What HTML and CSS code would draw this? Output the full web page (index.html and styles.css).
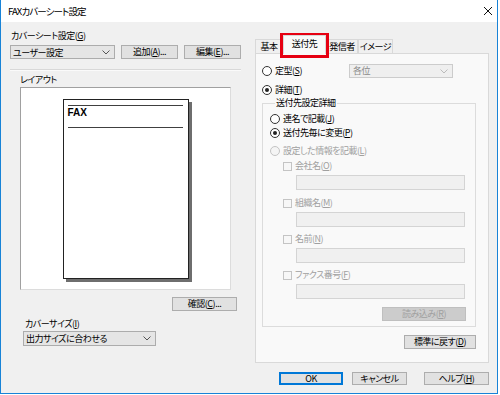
FILE: index.html
```html
<!DOCTYPE html>
<html lang="ja">
<head>
    <meta charset="UTF-8">
    <title>FAXカバーシート設定</title>
    <link rel="stylesheet" href="styles.css">
</head>
<body>
    <div class="window">
        <!-- タイトルバー -->
        <div class="titlebar">
            <span class="title">FAXカバーシート設定</span>
            <svg class="close" width="10" height="10" viewBox="0 0 10 10">
                <line x1="1" y1="1" x2="9" y2="9"/>
                <line x1="9" y1="1" x2="1" y2="9"/>
            </svg>
        </div>

        <div class="dialog">
            <div class="main">
                <!-- 左側 -->
                <div class="left">
                    <div class="label top-label">カバーシート設定(<u>G</u>)</div>
                    <div class="row-btns">
                        <div class="combo combo-user">
                            <span>ユーザー設定</span>
                            <svg class="chev" width="8" height="5" viewBox="0 0 8 5"><polyline points="0.5,0.5 4,4 7.5,0.5"/></svg>
                        </div>
                        <div class="btn btn-add">追加(<u>A</u>)...</div>
                        <div class="btn btn-edit">編集(<u>E</u>)...</div>
                    </div>
                    <div class="separator"></div>
                    <div class="label layout-label">レイアウト</div>
                    <div class="preview">
                        <div class="page">
                            <div class="page-line"></div>
                            <div class="page-fax">FAX</div>
                            <div class="page-line second"></div>
                        </div>
                    </div>
                    <div class="btn btn-check">確認(<u>C</u>)...</div>
                    <div class="label size-label">カバーサイズ(<u>I</u>)</div>
                    <div class="combo combo-size">
                        <span>出力サイズに合わせる</span>
                        <svg class="chev" width="8" height="5" viewBox="0 0 8 5"><polyline points="0.5,0.5 4,4 7.5,0.5"/></svg>
                    </div>
                </div>

                <!-- 右側 タブ -->
                <div class="right">
                    <div class="tabs">
                        <div class="tab tab-basic">基本</div>
                        <div class="tab tab-dest active">送付先</div>
                        <div class="tab tab-sender">発信者</div>
                        <div class="tab tab-image">イメージ</div>
                    </div>
                    <div class="panel">
                        <div class="opt-row first">
                            <span class="radio"></span>
                            <span>定型(<u>S</u>)</span>
                            <div class="combo combo-fixed disabled">
                                <span>各位</span>
                                <svg class="chev" width="8" height="5" viewBox="0 0 8 5"><polyline points="0.5,0.5 4,4 7.5,0.5"/></svg>
                            </div>
                        </div>
                        <div class="opt-row second">
                            <span class="radio checked"></span>
                            <span>詳細(<u>T</u>)</span>
                        </div>

                        <fieldset class="group">
                            <legend>送付先設定詳細</legend>
                            <div class="opt-row r-joint">
                                <span class="radio"></span>
                                <span>連名で記載(<u>J</u>)</span>
                            </div>
                            <div class="opt-row r-each">
                                <span class="radio checked"></span>
                                <span>送付先毎に変更(<u>P</u>)</span>
                            </div>
                            <div class="opt-row r-info disabled">
                                <span class="radio"></span>
                                <span>設定した情報を記載(<u>L</u>)</span>
                            </div>

                            <div class="opt-row chk-row first-chk disabled">
                                <span class="checkbox"></span>
                                <span>会社名(<u>O</u>)</span>
                            </div>
                            <div class="textbox"></div>
                            <div class="opt-row chk-row disabled">
                                <span class="checkbox"></span>
                                <span>組織名(<u>M</u>)</span>
                            </div>
                            <div class="textbox"></div>
                            <div class="opt-row chk-row next-chk disabled">
                                <span class="checkbox"></span>
                                <span>名前(<u>N</u>)</span>
                            </div>
                            <div class="textbox"></div>
                            <div class="opt-row chk-row next-chk disabled">
                                <span class="checkbox"></span>
                                <span>ファクス番号(<u>F</u>)</span>
                            </div>
                            <div class="textbox"></div>
                            <div class="btn btn-load disabled">読み込み(<u>R</u>)</div>
                        </fieldset>

                        <div class="btn btn-reset">標準に戻す(<u>D</u>)</div>
                    </div>
                </div>
            </div>

            <!-- 下部ボタン -->
            <div class="footer">
                <div class="btn btn-ok">OK</div>
                <div class="btn btn-cancel">キャンセル</div>
                <div class="btn btn-help">ヘルプ(<u>H</u>)</div>
            </div>
        </div>

        <!-- 注目枠 -->
        <div class="highlight"></div>
    </div>
</body>
</html>
```

FILE: styles.css
```css
* {
    margin: 0;
    padding: 0;
    box-sizing: border-box;
}

body {
    background-color: #ffffff;
    font-family: "Noto Sans CJK JP", "Noto Sans", sans-serif;
    font-size: 9px;
    font-feature-settings: "palt";
    letter-spacing: -0.5px;
    white-space: nowrap;
    color: #000;
}

u {
    text-decoration: underline;
    text-underline-offset: 1px;
}

/* ウィンドウ */
.window {
    width: 498px;
    height: 394px;
    border: 1px solid #1883d7;
    border-top: none;
    position: relative;
    background-color: #f0f0f0;
}

.titlebar {
    height: 22px;
    background-color: #ffffff;
    display: flex;
    align-items: center;
    padding-left: 7px;
}

.title {
    font-size: 9.5px;
    letter-spacing: -0.9px;
}

.close {
    margin-left: auto;
    margin-right: 4px;
    stroke: #111;
    stroke-width: 1;
}

.dialog {
    padding-left: 9px;
}

.main {
    display: flex;
}

/* 共通部品 */
.label {
    line-height: 14px;
}

.btn {
    height: 14px;
    background-color: #e1e1e1;
    border: 1px solid #adadad;
    display: flex;
    align-items: center;
    justify-content: center;
    line-height: 12px;
}

.btn.disabled {
    background-color: #cccccc;
    border-color: #bfbfbf;
    color: #a0a0a0;
}

.combo {
    height: 14px;
    background-color: #e5e5e5;
    border: 1px solid #acacac;
    display: flex;
    align-items: center;
    padding-left: 2px;
    padding-right: 4px;
}

.combo .chev {
    margin-left: auto;
    fill: none;
    stroke: #555;
    stroke-width: 1;
}

.combo.disabled {
    background-color: #efefef;
    border-color: #cccccc;
    color: #8a8a8a;
}

.combo.disabled .chev {
    stroke: #bbb;
}

/* 左側 */
.left {
    width: 231px;
    display: flex;
    flex-direction: column;
}

.top-label {
    margin-top: 7px;
    margin-left: 1px;
}

.row-btns {
    display: flex;
    margin-top: 2px;
}

.combo-user {
    width: 105px;
}

.btn-add {
    width: 57px;
    margin-left: 6px;
}

.btn-edit {
    width: 57px;
    margin-left: 6px;
}

.separator {
    margin-top: 10px;
    height: 2px;
    border-top: 1px solid #d8d8d8;
    border-bottom: 1px solid #fafafa;
}

.layout-label {
    margin-top: 2px;
    margin-left: 10px;
}

.preview {
    margin-left: 10px;
    width: 211px;
    height: 203px;
    background-color: #ffffff;
    border-top: 1px solid #a0a0a0;
    border-left: 1px solid #a0a0a0;
    border-right: 1px solid #dcdcdc;
    border-bottom: 1px solid #dcdcdc;
}

.page {
    width: 126px;
    height: 180px;
    margin: 11px auto 0;
    border: 1px solid #222;
    box-shadow: 3px 3px 0 #6e6e6e;
    padding: 5px 5px 0 4px;
}

.page-line {
    height: 1px;
    background-color: #404040;
}

.page-line.second {
    margin-top: 7px;
}

.page-fax {
    font-family: "Liberation Sans", sans-serif;
    font-weight: bold;
    font-size: 10px;
    letter-spacing: 0;
    line-height: 14px;
}

.btn-check {
    width: 65px;
    margin-top: 7px;
    margin-left: 162px;
}

.size-label {
    margin-top: 6px;
    margin-left: 15px;
}

.combo-size {
    width: 133px;
    height: 15px;
    margin-left: 13px;
}

/* 右側 タブ */
.right {
    width: 234px;
    margin-left: 14px;
    display: flex;
    flex-direction: column;
}

.tabs {
    display: flex;
    align-items: flex-end;
    margin-top: 13px;
    height: 19px;
    margin-bottom: -1px;
}

.tab {
    height: 15px;
    border: 1px solid #d9d9d9;
    border-bottom: none;
    background-color: #f0f0f0;
    display: flex;
    align-items: center;
    justify-content: center;
    line-height: 12px;
}

.tab-basic { width: 28px; }
.tab-dest { width: 43px; }
.tab-sender { width: 32px; }
.tab-image { width: 35px; }

.tab.active {
    height: 19px;
    background-color: #f9f9f9;
    position: relative;
    z-index: 1;
    padding-bottom: 2px;
}

.panel {
    height: 310px;
    border: 1px solid #d9d9d9;
    background-color: #f9f9f9;
    padding-left: 6px;
    display: flex;
    flex-direction: column;
}

.opt-row {
    display: flex;
    align-items: center;
    height: 14px;
    line-height: 12px;
}

.opt-row.first {
    height: 16px;
    margin-top: 9px;
}

.opt-row.second {
    margin-top: 4px;
}

.opt-row.disabled {
    color: #a0a0a0;
}

.radio {
    width: 10px;
    height: 10px;
    border: 1px solid #333;
    border-radius: 50%;
    background-color: #fff;
    margin-right: 3px;
    display: flex;
    align-items: center;
    justify-content: center;
}

.radio.checked::after {
    content: '';
    width: 4px;
    height: 4px;
    border-radius: 50%;
    background-color: #222;
}

.opt-row.disabled .radio {
    border-color: #c4c4c4;
    background-color: #f4f4f4;
}

.checkbox {
    width: 9px;
    height: 9px;
    border: 1px solid #c4c4c4;
    background-color: #f7f7f7;
    margin-right: 3px;
}

.combo-fixed {
    width: 104px;
    margin-left: auto;
    margin-right: 35px;
    padding-left: 3px;
}

/* 送付先設定詳細 */
.group {
    width: 214px;
    border: 1px solid #dcdcdc;
    padding: 0 9px 5px 7px;
    display: flex;
    flex-direction: column;
}

.group legend {
    line-height: 12px;
    margin-left: 5px;
    padding: 0 1px;
}

.r-joint {
    margin-top: 3px;
}

.r-info {
    margin-top: 4px;
}

.chk-row {
    margin-left: 13px;
    margin-top: 6px;
}

.chk-row.first-chk {
    margin-top: 1px;
}

.chk-row.next-chk {
    margin-top: 5px;
}

.textbox {
    width: 169px;
    height: 15px;
    margin-left: 26px;
    margin-top: 2px;
    border: 1px solid #d4d4d4;
    background-color: #f0f0f0;
}

.btn-load {
    width: 84px;
    margin-top: 8px;
    margin-left: 112px;
}

.btn-reset {
    width: 72px;
    margin-top: 8px;
    margin-left: 142px;
}

/* 下部ボタン */
.footer {
    display: flex;
    margin-top: 9px;
}

.footer .btn {
    height: 13px;
}

.btn-ok {
    width: 64px;
    margin-left: 269px;
    border-color: #0078d7;
    box-shadow: inset 0 0 0 1px #0078d7;
}

.btn-cancel {
    width: 55px;
    margin-left: 9px;
}

.btn-help {
    width: 65px;
    margin-left: 17px;
}

/* 注目枠 */
.highlight {
    position: absolute;
    left: 279px;
    top: 33px;
    width: 49px;
    height: 25px;
    border: 3px solid #e60012;
    pointer-events: none;
}
```
